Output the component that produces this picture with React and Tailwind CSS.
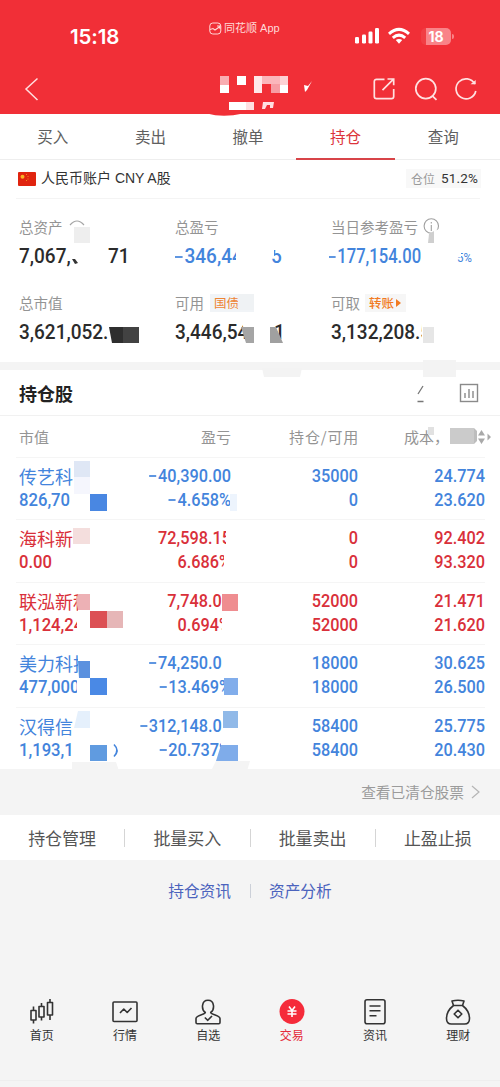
import React from "react";

const BLUE = "text-[#4384dc]";
const RED = "text-[#d9303a]";

const rows = [
  { name: "传艺科", value: "826,70", profit: "−40,390.00", rate: "−4.658%", held: "35000", free: "0", cost: "24.774", price: "23.620", tone: BLUE },
  { name: "海科新", value: "0.00", profit: "72,598.15", rate: "6.686%", held: "0", free: "0", cost: "92.402", price: "93.320", tone: RED },
  { name: "联泓新科", value: "1,124,24", profit: "7,748.00", rate: "0.694%", held: "52000", free: "52000", cost: "21.471", price: "21.620", tone: RED },
  { name: "美力科技", value: "477,000", profit: "−74,250.00", rate: "−13.469%", held: "18000", free: "18000", cost: "30.625", price: "26.500", tone: BLUE },
  { name: "汉得信", value: "1,193,1", profit: "−312,148.00", rate: "−20.737%", held: "58400", free: "58400", cost: "25.775", price: "20.430", tone: BLUE },
];

function Minus({ children }) {
  const negative = children.startsWith("−");
  return (
    <>
      {negative && <span className="mr-[2px] inline-block h-[2px] w-[8px] bg-current align-[5px] opacity-85" />}
      {negative ? children.slice(1) : children}
    </>
  );
}

function Cell({ a, b, className = "" }) {
  return (
    <div className={`flex origin-right scale-x-[0.88] flex-col items-end whitespace-nowrap font-['Roboto',sans-serif] text-[18.5px] font-medium leading-[24px] ${className}`}>
      <div><Minus>{a}</Minus></div>
      <div><Minus>{b}</Minus></div>
    </div>
  );
}

function Big({ children, className = "", scale = "scale-x-[0.95]" }) {
  return (
    <span className={`inline-block origin-left whitespace-nowrap font-['Roboto',sans-serif] text-[20px] font-medium leading-[24px] ${scale} ${className}`}>
      <Minus>{children}</Minus>
    </span>
  );
}

function StatusBar() {
  return (
    <div className="flex h-[64px] items-start pt-[20px]">
      <div className="w-[209px] pl-[70px] pt-[5px] font-['Inter',sans-serif] text-[20.5px] font-semibold leading-[24px] tracking-[-0.1px]">15:18</div>
      <div className="flex w-[145px] items-center gap-[2px] text-[11px] leading-[17px] text-[#ffd9d8]">
        <svg width="13" height="13" viewBox="0 0 13 13" fill="none" stroke="currentColor">
          <rect x="0.8" y="1" width="11" height="11" rx="3" strokeWidth="1" />
          <path d="M1 7.5l3-1 2 1.5 5-3.5M8 4h3v3" strokeWidth="1.1" />
        </svg>
        <span className="whitespace-nowrap font-['Liberation_Sans','Noto_Sans_CJK_SC',sans-serif]">同花顺 App</span>
      </div>
      <svg className="mt-[7px]" width="26" height="18" viewBox="0 0 26 18" fill="white">
        <rect x="1" y="10" width="4" height="6.5" rx="1.2" />
        <rect x="8" y="7.5" width="4" height="9" rx="1.2" />
        <rect x="14.5" y="4.5" width="4" height="12" rx="1.2" />
        <rect x="21" y="1" width="4" height="15.5" rx="1.2" />
      </svg>
      <svg className="ml-[7px] mt-[7px]" width="24" height="18" viewBox="0 0 24 18" fill="none" stroke="white" strokeWidth="3">
        <path d="M2 6.8Q12-2 22 6.8" />
        <path d="M5.8 10.8Q12 5.5 18.2 10.8" />
        <path d="M12 16.8l-3.2-3.7q3.2-2.4 6.4 0z" fill="white" stroke="none" />
      </svg>
      <div className="ml-[10px] mt-[8px] flex h-[17px] w-[30px] items-center justify-center rounded-[5px] bg-gradient-to-r from-[#f13e44] from-15% to-[#f98388] to-15% font-['Inter',sans-serif] text-[14px] font-bold leading-[17px]">18</div>
      <div className="ml-[1px] mt-[14px] h-[5px] w-[2px] rounded-r bg-[#f98388]" />
    </div>
  );
}

function TitleBar() {
  return (
    <div className="flex h-[49px] items-center justify-between pl-[24px] pr-[22px]">
      <svg width="15" height="24" viewBox="0 0 15 24" fill="none" stroke="#ffdfdf" strokeWidth="1.5">
        <path d="M13.5 1.5L2 12l11.5 11" />
      </svg>
      <div className="flex gap-[18px] text-[#ffe1e1]">
        <svg width="24" height="24" viewBox="0 0 24 24" fill="none" stroke="currentColor" strokeWidth="1.7">
          <path d="M12.5 2.3H4.5a2.2 2.2 0 0 0-2.2 2.2v15a2.2 2.2 0 0 0 2.2 2.2h15a2.2 2.2 0 0 0 2.2-2.2V12" />
          <path d="M15.5 2h6.2v6.2M21.5 2.2L10.5 13.2" />
        </svg>
        <svg width="24" height="24" viewBox="0 0 24 24" fill="none" stroke="currentColor" strokeWidth="1.7">
          <circle cx="11.8" cy="11.6" r="10" />
          <path d="M18.3 18.8l4.2 4" />
        </svg>
        <svg className="-ml-[2px]" width="24" height="24" viewBox="0 0 24 24" fill="none" stroke="currentColor" strokeWidth="1.7">
          <path d="M20.8 7A10 10 0 1 0 21.8 14" />
          <path d="M16.5 7.2h5.2V3z" fill="currentColor" stroke="none" />
        </svg>
      </div>
    </div>
  );
}

const tabs = ["买入", "卖出", "撤单", "持仓", "查询"];

function Label({ children, extra }) {
  return (
    <div className="flex h-[24px] items-center whitespace-nowrap text-[14.5px] leading-[22px] text-[#949494]">
      {children}
      {extra}
    </div>
  );
}

function Summary() {
  return (
    <div className="grid h-[164px] grid-cols-[156px_156px_1fr] grid-rows-[76px_76px] pl-[19px] pt-[16px] text-[#2b2b2b]">
      <div>
        <Label extra={
          <svg className="ml-[6px]" width="16" height="16" viewBox="0 0 16 16" fill="none" stroke="#a5a5a5" strokeWidth="1.2"><path d="M1 6Q8-2 15 6" /></svg>
        }>总资产</Label>
        <div className="flex pt-[5px]">
          <Big className="w-[89px]">7,067,</Big>
          <Big>71</Big>
        </div>
      </div>
      <div>
        <Label>总盈亏</Label>
        <div className={`flex pt-[5px] ${BLUE}`}>
          <Big className="w-[96px]">−346,44</Big>
          <Big>5</Big>
        </div>
      </div>
      <div>
        <Label extra={
          <svg className="ml-[5px]" width="17" height="17" viewBox="0 0 17 17" fill="none" stroke="#a0a0a0" strokeWidth="1.1"><circle cx="8.3" cy="8" r="7.2" /><path d="M8.3 7v6M8.3 4v1.5" /></svg>
        }>当日参考盈亏</Label>
        <div className={`-ml-[2px] flex pt-[5px] ${BLUE}`}>
          <Big className="w-[128px]" scale="scale-x-[0.83]">−177,154.00</Big>
          <span className="origin-left scale-x-[0.88] pt-[2px] font-['Roboto',sans-serif] text-[13px] leading-[24px]">5%</span>
        </div>
      </div>
      <div>
        <Label>总市值</Label>
        <div className="pt-[5px]"><Big>3,621,052.</Big></div>
      </div>
      <div>
        <Label extra={<span className="ml-[6px] h-[18px] w-[44px] bg-[#f1f4f7] pl-[4px] text-[12.5px] leading-[18px] text-[#ee8434]">国债</span>}>可用</Label>
        <div className="flex pt-[5px]">
          <Big className="w-[99px]">3,446,54</Big>
          <Big>1</Big>
        </div>
      </div>
      <div>
        <Label extra={
          <span className="ml-[5px] flex h-[18px] w-[41px] items-center gap-[1px] bg-[#f6f6f6] pl-[4px] text-[12.5px] font-medium leading-[18px] text-[#f27a22]">
            转账
            <svg width="6" height="8" viewBox="0 0 6 8" fill="currentColor"><path d="M1 0l5 4-5 4z" /></svg>
          </span>
        }>可取</Label>
        <div className="pt-[5px]"><Big>3,132,208.5</Big></div>
      </div>
    </div>
  );
}

function Holdings() {
  return (
    <div>
      <div className="flex h-[46px] items-center justify-between border-b border-[#f1f1f1] pl-[19px] pr-[21px]">
        <h2 className="text-[18px] font-bold leading-[24px] text-[#222]">持仓股</h2>
        <div className="flex items-center gap-[33px]">
          <svg width="20" height="20" viewBox="0 0 20 20" fill="none" stroke="#777" strokeWidth="1.3"><path d="M12 11l5-8M11.500 18.500h6" /></svg>
          <svg width="20" height="20" viewBox="0 0 20 20" fill="none" stroke="#8a8a8a" strokeWidth="1.4"><rect x="1.5" y="1.5" width="17" height="17" /><path d="M6 10v5M10 6v9M14 8v7" /></svg>
        </div>
      </div>
      <div className="grid h-[41px] grid-cols-[112px_100px_127px_1fr] items-center pl-[19px] text-[15px] leading-[24px] text-[#949494]">
        <div>市值</div>
        <div className="text-right">盈亏</div>
        <div className="-ml-4 whitespace-nowrap text-right tracking-[0.8px] -mr-[1px]">持仓/可用</div>
        <div className="flex items-center pl-[46px]">
          <span className="w-[74px] whitespace-nowrap">成本，</span>
          <svg width="14" height="16" viewBox="0 0 14 16" fill="#a9a9a9"><path d="M0 6.5L3.5 1 7 6.5zM0 9.5L3.5 15 7 9.5zM9.5 4.5L13 8l-3.5 3.5z" /></svg>
        </div>
      </div>
      {rows.map((r) => (
        <div key={r.name} className={`relative grid h-[62.4px] grid-cols-[112px_100px_127px_127px] pl-[19px] pt-[7px] ${r.tone}`}>
          <div className="absolute left-[16px] right-[15px] top-0 h-px bg-[#f5f5f5]" />
          <div className="whitespace-nowrap">
            <div className="text-[18px] leading-[24px]">{r.name}</div>
            <div className="origin-left scale-x-[0.9] font-['Roboto',sans-serif] text-[18.5px] font-medium leading-[24px]">{r.value}</div>
          </div>
          <Cell a={r.profit} b={r.rate} />
          <Cell a={r.held} b={r.free} />
          <Cell a={r.cost} b={r.price} />
        </div>
      ))}
    </div>
  );
}

const iconProps = { width: 28, height: 28, viewBox: "0 0 28 28", fill: "none", stroke: "#333", strokeWidth: 1.6, strokeLinejoin: "round" };

const nav = [
  { label: "首页", icon: <svg {...iconProps}><path d="M5.5 8.5v4M5.5 22v3.5M13.5 5v3.5M13.5 19v3.5M22 1v3M22 17v5" /><rect x="3" y="12.5" width="5" height="9.5" /><rect x="11" y="8.5" width="5" height="10.5" /><rect x="19.5" y="4.5" width="5" height="12.5" /></svg> },
  { label: "行情", icon: <svg {...iconProps}><rect x="2" y="4" width="24" height="19.5" rx="1" /><path d="M9 15l3.8-4 3.4 3.5 4.3-4.5" /></svg> },
  { label: "自选", icon: <svg {...iconProps}><path d="M11.300 14.500C7.200 11.500 7.200 2.300 14 2.300s6.800 9.200 2.700 12.200c0 2 9.300 2.800 9.300 6V24.500q0 1.200-1.200 1.200H3.200Q2 25.700 2 24.500V20.500c0-3.200 9.300-4 9.300-6z" /><path d="M10.800 19.500l3 2.800 4.200-4.300" /></svg> },
  { label: "交易", active: true, icon: <svg {...iconProps} stroke="white"><circle cx="14" cy="13.5" r="12.5" fill="#f52b3a" stroke="none" /><path d="M11 8.5l3 4 3-4M9.500 13h9M9.500 16h9M14 12.5V19" /></svg> },
  { label: "资讯", icon: <svg {...iconProps}><rect x="4" y="1.7" width="20" height="24" rx="2" /><path d="M8.5 8h11M8.5 12.8h11M8.5 17.8h7" /></svg> },
  { label: "理财", icon: <svg {...iconProps}><path d="M9.5 7.5L8 3q6-1.500 12 0l-1.500 4.500zM9.5 7.5C5 11 2.500 16 2.500 20.500c0 4 2.500 5.500 5 5.500h13c2.500 0 5-1.500 5-5.500C25.500 16 23 11 18.500 7.500M14 12.200l3.800 3.800-3.800 3.800-3.800-3.800z" /></svg> },
];

/* Redaction patches: points plus fill colour, in page pixels. */
const patches = [
  ["220,76 229,76 229,85 220,85", "#f9adb2"], ["220,85 229,85 229,93 220,93", "#fff"],
  ["237,76 246,76 246,85 237,85", "#fff"],
  ["254,76 262,76 262,93 254,93", "#ffe8ea"], ["262,76 280,76 280,84 262,84", "#fbb6bb"], ["271,84 280,84 280,93 271,93", "#f79da4"],
  ["280,76 288,76 288,85 280,85", "#fdd1d4"], ["280,85 288,85 288,93 280,93", "#fff"],
  ["304,85 308,86 312,81 307,90 305,92", "#fff"],
  ["229,102 246,102 246,110 229,110", "#fff"], ["246,102 254,102 254,110 246,110", "#ffe0e2"],
  ["263,102 274,102 273,108 270,108 270,105 267,105 265,109 262,109", "#ffe0e2"],
  ["74,227 90,227 90,243 74,243", "#eeeeee"],
  ["71,247 84,247 84,268 71,268", "#fff"],
  ["72,259 75,259 78,263 75,264", "#333"],
  ["236,245 250,245 250,268 236,268", "#fff"], ["268,245 284,245 284,250 268,250", "#fff"], ["268,250 274,250 274,257 268,257", "#fff"],
  ["429,234 434,231 434,243 428,243", "#cfcfcf"], ["434,231 442,228 442,243 434,243", "#fff"],
  ["455,245 461,245 461,257 455,257", "#fff"],
  ["109,327 123,327 123,343 112,343", "#2e2e2e"], ["123,327 139,327 139,343 123,343", "#424242"],
  ["242,320 254,320 254,345 246,345", "#fff"],
  ["241,327 254,327 254,343 246,343", "#a5a5a5"], ["254,320 270,320 270,345 254,345", "#fff"],
  ["270,327 276,327 283,343 270,343", "#a0a0a0"],
  ["422,320 446,320 446,345 422,345", "#fff"],
  ["423,327 434,327 434,343 423,343", "#e6e6e6"],
  ["238,294 254,294 254,310 238,310", "#eff2f4"],
  ["262,368 302,368 300,377 264,377", "#f3f3f3"], ["423,360 456,360 456,377 423,377", "#f3f3f3"],
  ["428,427 434,427 434,435 428,435", "#e1e1e1"],
  ["450,428 474,428 474,444 450,444", "#cbcbcb"], ["474,428 477,431 477,441 474,444", "#bdbdbd"],
  ["74,461 90,461 90,477 74,477", "#dfe7f5"], ["74,477 90,477 90,494 74,494", "#f5f6fd"],
  ["90,494 107,494 107,511 90,511", "#4987e2"],
  ["230,494 237,494 237,511 230,511", "#edf4fd"],
  ["73,528 90,528 90,544 73,544", "#f4dedd"],
  ["226,530 237,530 237,550 226,550", "#fff"], ["224,553 237,553 237,573 224,573", "#fff"],
  ["78,590 95,590 95,611 78,611", "#fff"],
  ["78,594 90,594 90,610 78,610 76,600", "#edb1b5"],
  ["90,611 107,611 107,628 90,628", "#dc5054"], ["107,611 123,611 123,628 107,628", "#e6b6b7"],
  ["77,614 90,614 90,636 77,636", "#fff"],
  ["222,590 238,590 238,611 222,611", "#fff"],
  ["222,594 238,594 238,611 222,611", "#ef8d90"], ["222,614 237,614 237,636 222,636", "#fff"],
  ["78,652 95,652 95,678 78,678", "#fff"],
  ["78,661 90,661 90,678 79,678", "#5b91df"],
  ["77,679 90,679 90,698 77,698", "#fff"], ["90,678 107,678 107,695 90,695", "#4a89e5"],
  ["222,654 234,654 234,675 222,675", "#fff"], ["224,678 238,678 238,695 224,695", "#81adeb"],
  ["78,711 90,711 90,728 74,728", "#e5f0fc"],
  ["74,740 90,740 90,763 74,763", "#fff"], ["90,745 107,745 107,761 90,761", "#609be0"],
  ["222,716 238,716 238,737 222,737", "#fff"],
  ["223,711 238,711 238,728 223,728", "#90b9e8"],
  ["221,738 238,738 238,745 221,745", "#fff"],
  ["221,745 238,745 238,761 216,761", "#7facea"],
  ["72,762 116,762 119,771 72,771", "#f4f4f4"], ["216,761 250,761 247,771 211,771", "#f4f4f4"],
];

export default function App() {
  return (
    <div className="relative h-[1087px] w-[500px] overflow-hidden bg-[#f4f4f4] font-['Noto_Sans_CJK_SC',sans-serif]">
      <header className="h-[113.5px] bg-[#f12f37] text-white">
        <StatusBar />
        <TitleBar />
      </header>
      <main>
        <div className="flex h-[46px] border-b border-[#eeeeee] bg-white pl-[4px] pr-[8px]">
          {tabs.map((t) => (
            <div key={t} className={`relative flex flex-1 items-center justify-center text-[15.5px] leading-[24px] ${t === "持仓" ? "text-[#dc343b]" : "text-[#606060]"}`}>
              {t}
              {t === "持仓" && <div className="absolute -left-px -right-px -bottom-px h-[2px] bg-[#d84448]" />}
            </div>
          ))}
        </div>
        <section className="h-[202.5px] bg-white">
          <div className="ml-[16px] mr-[20px] flex h-[39px] items-center justify-between border-b border-[#f4f4f4] pl-[2px]">
            <div className="flex items-center gap-[5px] text-[14px] leading-[20px] text-[#333]">
              <svg width="18" height="14" viewBox="0 0 18 14"><rect width="18" height="14" rx="1" fill="#e0240f" /><circle cx="4.5" cy="4.8" r="2" fill="#f8b526" /><path d="M8 2.5h1M9.5 4.5h1M9.5 7h1M8 8.5h1" stroke="#ef8b20" /></svg>
              <span className="-mt-px font-['Liberation_Sans','Noto_Sans_CJK_SC',sans-serif]">人民币账户 CNY A股</span>
            </div>
            <div className="-mr-px flex h-[19px] w-[75px] items-center bg-[#f8f8f8] pl-[5px]">
              <span className="w-[30px] text-[12px] leading-[19px] text-[#9a9a9a]">仓位</span>
              <span className="font-['Roboto',sans-serif] text-[13.5px] leading-[19px] tracking-[0.2px] text-[#333]">51.2%</span>
            </div>
          </div>
          <Summary />
        </section>
        <section className="mt-[8px] h-[399px] bg-white">
          <Holdings />
        </section>
        <div className="flex h-[46px] items-center justify-end gap-[7px] pr-[20px] text-[14.7px] leading-[24px] text-[#9b9b9b]">
          查看已清仓股票
          <svg width="9" height="14" viewBox="0 0 9 14" fill="none" stroke="#b5b5b5" strokeWidth="1.2"><path d="M1 1l7 6-7 6" /></svg>
        </div>
        <div className="flex h-[45px] items-center divide-x divide-[#d5d5d5] bg-white text-center text-[17px] leading-[18px] text-[#555]">
          {["持仓管理", "批量买入", "批量卖出", "止盈止损"].map((t) => <div key={t} className="flex-1">{t}</div>)}
        </div>
        <div className="flex h-[62px] items-center justify-center text-[15.7px] leading-[14px] text-[#4b63bd]">
          <span className="border-r border-[#ccd0d8] pr-[19px]">持仓资讯</span>
          <span className="pl-[18px]">资产分析</span>
        </div>
      </main>
      <nav className="mt-[76px] flex h-[83px] border-b border-[#eeeeee]">
        {nav.map((n) => (
          <div key={n.label} className="flex flex-1 flex-col items-center">
            {n.icon}
            <span className={`text-[12px] leading-[18px] ${n.active ? "text-[#e52b3b]" : "text-[#333]"}`}>{n.label}</span>
          </div>
        ))}
      </nav>
      <svg className="pointer-events-none absolute left-0 top-0" width="500" height="1087" viewBox="0 0 500 1087">
        {patches.map(([points, fill]) => <polygon key={points} points={points} fill={fill} />)}
        <path d="M207 113.5Q223 118 243 113.5z" fill="#f12f37" />
        <path d="M114 744.5q6 6 0 12" fill="none" stroke="#4384dc" strokeWidth="1.6" />
      </svg>
    </div>
  );
}
